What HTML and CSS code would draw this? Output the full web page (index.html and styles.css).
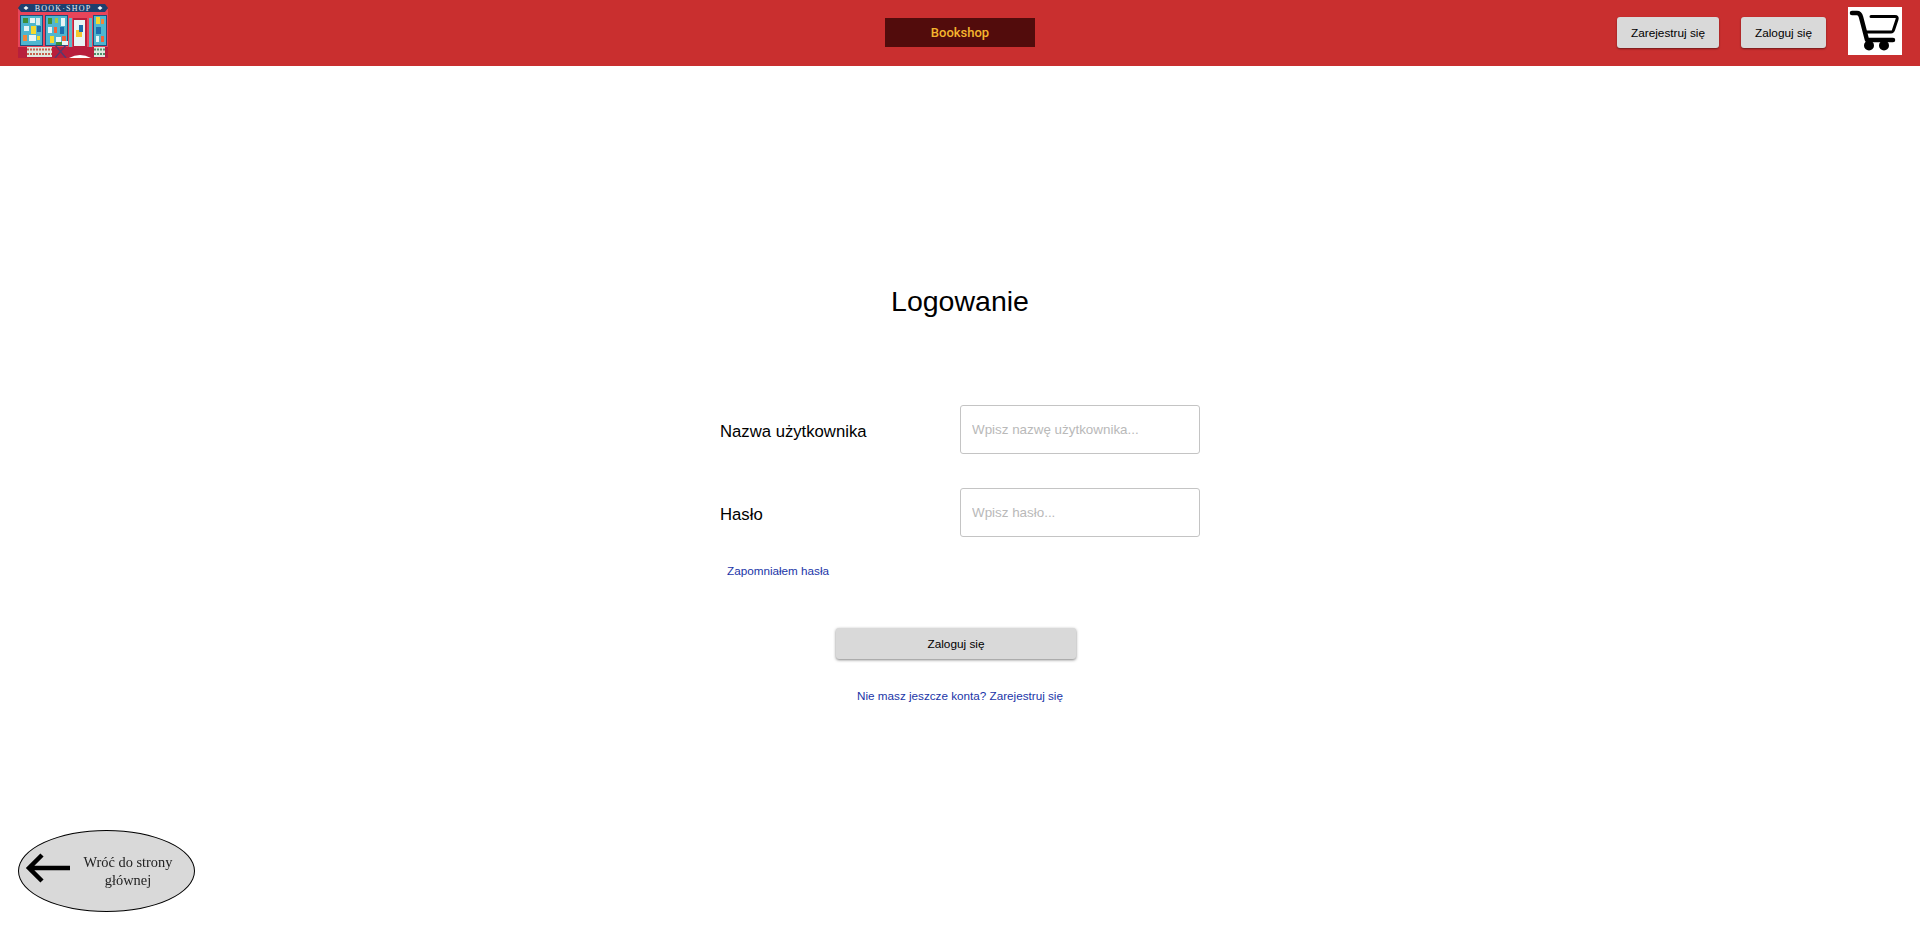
FILE: index.html
```html
<!DOCTYPE html>
<html lang="pl">
<head>
<meta charset="utf-8">
<title>Bookshop</title>
<link rel="stylesheet" href="styles.css">
</head>
<body>
<header class="topbar">
  <svg class="logo" viewBox="0 0 90 54" width="90" height="54" aria-hidden="true">
    <rect x="0" y="5" width="90" height="49" fill="#e8455a"/>
    <path d="M3 0H87L90 4L87 8H3L0 4Z" fill="#1d3f6e"/>
    <text x="45" y="6.800" class="logo-text" text-anchor="middle">BOOK·SHOP</text>
    <path d="M8 2L10.500 4L8 6L5.500 4Z" fill="#f2f6f8"/>
    <path d="M82 2L84.500 4L82 6L79.500 4Z" fill="#f2f6f8"/>
    <rect x="2" y="11" width="23" height="31" fill="#1d4f7e"/>
    <rect x="3" y="12" width="21" height="29" fill="#4fb6cf"/>
    <rect x="5" y="14" width="5" height="5" fill="#3f8f3a"/><rect x="12" y="14" width="5" height="5" fill="#e8f4f4"/><rect x="18" y="14" width="4" height="7" fill="#d5ecf0"/>
    <rect x="6" y="22" width="5" height="5" fill="#e8f4f4"/><rect x="13" y="22" width="5" height="8" fill="#f3d92e"/><rect x="19" y="22" width="4" height="6" fill="#1d6fae"/>
    <rect x="5" y="31" width="4" height="6" fill="#f0873a"/><rect x="11" y="31" width="7" height="6" fill="#e8f4f4"/><rect x="19" y="32" width="3" height="4" fill="#f3d92e"/>
    <rect x="27" y="11" width="23" height="31" fill="#1d4f7e"/>
    <rect x="28" y="12" width="21" height="29" fill="#4fb6cf"/>
    <rect x="30" y="14" width="4" height="6" fill="#3f8f3a"/><rect x="37" y="14" width="3" height="5" fill="#9ccb4a"/><rect x="43" y="14" width="4" height="8" fill="#e8f4f4"/>
    <rect x="30" y="23" width="4" height="6" fill="#e8f4f4"/><rect x="36" y="23" width="3" height="6" fill="#f0633a"/><rect x="42" y="23" width="4" height="7" fill="#1d6fae"/>
    <rect x="32" y="32" width="4" height="7" fill="#f3d92e"/><rect x="38" y="33" width="5" height="6" fill="#e8f4f4"/><rect x="44" y="32" width="4" height="6" fill="#f0633a"/>
    <rect x="51" y="14" width="3" height="32" fill="#5fb8c9"/>
    <rect x="55" y="14" width="14" height="40" fill="#b81f3c"/>
    <rect x="56" y="16" width="11" height="26" fill="#e8f4f4"/>
    <rect x="58" y="26" width="6" height="7" fill="#f3c92e"/><rect x="61" y="21" width="4" height="7" fill="#1d6fae"/>
    <rect x="71" y="14" width="3" height="32" fill="#5fb8c9"/>
    <rect x="75" y="11" width="14" height="31" fill="#1d4f7e"/>
    <rect x="76" y="12" width="12" height="29" fill="#4fb6cf"/>
    <rect x="78" y="13" width="4" height="7" fill="#f3d92e"/><rect x="83" y="15" width="3" height="5" fill="#f0873a"/>
    <rect x="78" y="23" width="5" height="7" fill="#1d6fae"/><rect x="78" y="32" width="3" height="6" fill="#e8f4f4"/><rect x="83" y="32" width="3" height="6" fill="#f0633a"/>
    <path d="M0 43H55V54H0ZM69 43H90V54H69Z" fill="#b81f3c"/>
    <rect x="9" y="43" width="25" height="10" fill="#dfe9df"/>
    <path d="M9 45.500H34M9 50H34" stroke="#c6614e" stroke-width="2" stroke-dasharray="2 1"/>
    <rect x="76" y="43" width="11" height="10" fill="#dfe9df"/>
    <path d="M76 45.500H87M76 50H87" stroke="#4f8f6a" stroke-width="2" stroke-dasharray="2 1"/>
    <path d="M37 41L48 54M48 41L37 54" stroke="#5a3a6e" stroke-width="1.500"/>
    <rect x="38" y="38" width="6" height="3" fill="#3f8f3a"/>
    <rect x="44" y="37" width="6" height="4" fill="#e8f4f4"/>
    <path d="M51 54Q62 48 73 54Z" fill="#ffffff"/>
  </svg>
  <div class="brand">Bookshop</div>
  <nav class="actions">
    <button class="btn btn-register" type="button">Zarejestruj się</button>
    <button class="btn btn-login" type="button">Zaloguj się</button>
    <a class="cart" href="#" aria-label="Koszyk">
      <svg viewBox="0 0 54 48" width="54" height="48" aria-hidden="true">
        <path d="M4 6H9Q12 6 13 10L19 33H45" fill="none" stroke="#000" stroke-width="4.500" stroke-linecap="round" stroke-linejoin="round"/>
        <path d="M23 9.500H47Q50 9.500 49 12.500L45.500 23Q45 25 43 25H17" fill="none" stroke="#000" stroke-width="3" stroke-linecap="round" stroke-linejoin="round"/>
        <circle cx="21" cy="38.500" r="5" fill="#000"/>
        <circle cx="36" cy="38.500" r="5" fill="#000"/>
      </svg>
    </a>
  </nav>
</header>
<main class="page">
  <h1 class="title">Logowanie</h1>
  <form class="form">
    <div class="field">
      <label class="label" for="user">Nazwa użytkownika</label>
      <input class="input" id="user" type="text" placeholder="Wpisz nazwę użytkownika...">
    </div>
    <div class="field">
      <label class="label" for="pass">Hasło</label>
      <input class="input" id="pass" type="password" placeholder="Wpisz hasło...">
    </div>
    <a class="link link-forgot" href="#">Zapomniałem hasła</a>
    <button class="btn btn-submit" type="button">Zaloguj się</button>
    <a class="link link-register" href="#">Nie masz jeszcze konta? Zarejestruj się</a>
  </form>
</main>
<a class="back" href="#">
  <svg class="back-arrow" viewBox="0 0 46 34" width="46" height="34" aria-hidden="true">
    <path d="M45 17H4M17 4L4 17L17 30" fill="none" stroke="#000" stroke-width="4.500"/>
  </svg>
  <span class="back-text">Wróć do strony głównej</span>
</a>
</body>
</html>
```
FILE: styles.css
```css
* { box-sizing: border-box; }
html, body { margin: 0; height: 100%; }
body { font-family: "Liberation Sans", Arial, sans-serif; color: #000; background: #fff; overflow: hidden; }

.topbar {
  display: grid;
  grid-template-columns: 1fr 150px 1fr;
  align-items: center;
  height: 66px;
  padding: 0 18px;
  background: #c92f2f;
}
.logo { display: block; margin-top: -4px; }
.logo-text { font-family: "Liberation Serif", serif; font-size: 8px; letter-spacing: 1.2px; fill: #e8eef4; }
.brand {
  height: 29px;
  margin-bottom: 1px;
  line-height: 29px;
  text-align: center;
  font-family: Roboto, "Liberation Sans", sans-serif;
  font-size: 13px;
  font-weight: 500;
  color: #f5b52e;
  background: #520c0c;
}
.actions { display: flex; justify-content: flex-end; align-items: center; gap: 22px; padding-bottom: 1px; }

.btn {
  display: block;
  border: 0;
  border-radius: 3px;
  background: #d9d9d9;
  color: #000;
  font-family: "Liberation Sans", Arial, sans-serif;
  font-size: 11.800px;
  box-shadow: 0 1px 2px rgba(0, 0, 0, 0.45);
}
.btn-register { width: 102px; height: 31px; }
.btn-login { width: 85px; height: 31px; }
.cart { display: block; width: 54px; height: 48px; margin-top: -3px; background: #fff; }
.cart svg { display: block; }

.page { display: flex; flex-direction: column; align-items: center; }
.title { margin: 218px 0 0; font-size: 28.500px; font-weight: 400; line-height: 34px; }

.form { display: flex; flex-direction: column; width: 480px; margin-top: 87px; }
.field { display: grid; grid-template-columns: 240px 240px; align-items: center; margin-bottom: 34px; }
.field:nth-child(2) { margin-bottom: 0; }
.label { font-size: 16.700px; padding-top: 4px; }
.input {
  width: 240px;
  height: 49px;
  padding: 0 11px;
  border: 1px solid #c4c4c4;
  border-radius: 3px;
  font-family: "Liberation Sans", Arial, sans-serif;
  font-size: 13.400px;
  outline: none;
}
.input::placeholder { color: #b9b9b9; opacity: 1; }

.link { font-size: 11.700px; color: #1a35a8; text-decoration: none; }
.link-forgot { margin: 27px 0 0 7px; line-height: 14px; }
.btn-submit { width: 240px; height: 31px; margin: 50px 0 0 -8px; align-self: center; box-shadow: 0 1px 3px rgba(0, 0, 0, 0.5); }
.link-register { margin: 30px 0 0; align-self: center; line-height: 14px; }

.back {
  position: fixed;
  left: 18px;
  top: 830px;
  display: flex;
  align-items: center;
  width: 177px;
  height: 82px;
  padding-left: 6px;
  border: 1px solid #000;
  border-radius: 50%;
  background: #d9d9d9;
  color: #222;
  text-decoration: none;
  font-family: "Liberation Serif", serif;
  font-size: 14.400px;
}
.back-arrow { flex: none; margin-top: -7px; }
.back-text { width: 100px; margin-left: 7px; text-align: center; line-height: 18px; }
```
